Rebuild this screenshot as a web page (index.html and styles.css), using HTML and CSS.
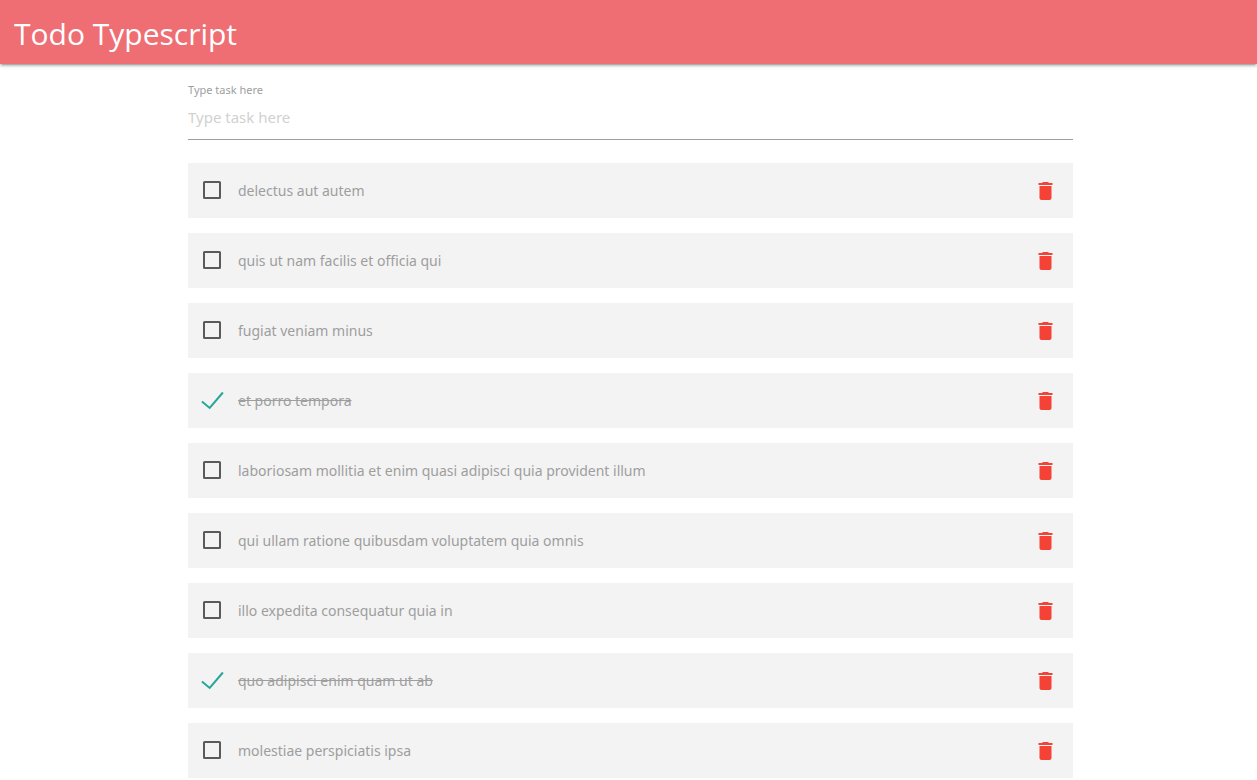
FILE: index.html
```html
<!DOCTYPE html>
<html lang="en">
<head>
<meta charset="utf-8">
<meta name="viewport" content="width=device-width, initial-scale=1">
<title>Todo Typescript</title>
<link rel="stylesheet" href="styles.css">
</head>
<body>
<svg class="sprite" aria-hidden="true">
  <symbol id="trash" viewBox="-0.500 -1 24 24"><path d="M6 19c0 1.1.9 2 2 2h8c1.1 0 2-.9 2-2V7H6v12zM19 4h-3.500l-1-1h-5l-1 1H5v2h14V4z"/></symbol>
</svg>
<header class="navbar"><a class="brand" href="#">Todo Typescript</a></header>
<main class="container">
  <form class="task-form">
    <label class="task-label" for="task">Type task here</label>
    <input class="task-input" id="task" type="text" placeholder="Type task here">
  </form>
  <ul class="todos">
    <li class="todo"><label class="todo-label"><input class="check" type="checkbox"><span>delectus aut autem</span></label><button class="delete" type="button" aria-label="Delete"><svg class="icon"><use href="#trash"/></svg></button></li>
    <li class="todo"><label class="todo-label"><input class="check" type="checkbox"><span>quis ut nam facilis et officia qui</span></label><button class="delete" type="button" aria-label="Delete"><svg class="icon"><use href="#trash"/></svg></button></li>
    <li class="todo"><label class="todo-label"><input class="check" type="checkbox"><span>fugiat veniam minus</span></label><button class="delete" type="button" aria-label="Delete"><svg class="icon"><use href="#trash"/></svg></button></li>
    <li class="todo"><label class="todo-label"><input class="check" type="checkbox" checked><span>et porro tempora</span></label><button class="delete" type="button" aria-label="Delete"><svg class="icon"><use href="#trash"/></svg></button></li>
    <li class="todo"><label class="todo-label"><input class="check" type="checkbox"><span>laboriosam mollitia et enim quasi adipisci quia provident illum</span></label><button class="delete" type="button" aria-label="Delete"><svg class="icon"><use href="#trash"/></svg></button></li>
    <li class="todo"><label class="todo-label"><input class="check" type="checkbox"><span>qui ullam ratione quibusdam voluptatem quia omnis</span></label><button class="delete" type="button" aria-label="Delete"><svg class="icon"><use href="#trash"/></svg></button></li>
    <li class="todo"><label class="todo-label"><input class="check" type="checkbox"><span>illo expedita consequatur quia in</span></label><button class="delete" type="button" aria-label="Delete"><svg class="icon"><use href="#trash"/></svg></button></li>
    <li class="todo"><label class="todo-label"><input class="check" type="checkbox" checked><span>quo adipisci enim quam ut ab</span></label><button class="delete" type="button" aria-label="Delete"><svg class="icon"><use href="#trash"/></svg></button></li>
    <li class="todo"><label class="todo-label"><input class="check" type="checkbox"><span>molestiae perspiciatis ipsa</span></label><button class="delete" type="button" aria-label="Delete"><svg class="icon"><use href="#trash"/></svg></button></li>
  </ul>
</main>
</body>
</html>
```
FILE: styles.css
```css
* {
  box-sizing: border-box;
}

body {
  margin: 0;
  background: #fff;
  font-family: "Segoe UI", "Noto Sans", "Open Sans", sans-serif;
  font-size: 14px;
}

.sprite {
  display: none;
}

.navbar {
  padding: 4px 14px 0;
  background: #ee6e73;
  box-shadow: 0 2px 2px 0 rgba(0, 0, 0, 0.14), 0 3px 1px -2px rgba(0, 0, 0, 0.12), 0 1px 5px 0 rgba(0, 0, 0, 0.2);
}

.brand {
  display: block;
  color: #fff;
  font-family: "Segoe UI", "Open Sans", sans-serif;
  font-size: 30px;
  line-height: 60px;
  text-decoration: none;
}

.container {
  padding: 16px 184px 0 188px;
}

.task-form {
  display: flex;
  flex-direction: column;
}

.task-label {
  color: #9e9e9e;
  font-size: 11px;
  line-height: 20px;
}

.task-input {
  width: 100%;
  height: 40px;
  padding: 0 0 5px;
  border: 0;
  border-bottom: 1px solid #9e9e9e;
  background: transparent;
  font-family: inherit;
  font-size: 15px;
  outline: 0;
}

.task-input::placeholder {
  color: #d1d1d1;
}

.todos {
  display: flex;
  flex-direction: column;
  gap: 15px;
  margin: 23px 0 0;
  padding: 0;
  list-style: none;
}

.todo {
  display: flex;
  gap: 16px;
  padding: 15px 16px 14px 12px;
  background: #f3f3f3;
}

.todo-label {
  display: flex;
  flex: 1;
  gap: 14px;
  color: #9e9e9e;
  line-height: 26px;
  cursor: pointer;
}

.check {
  flex: none;
  width: 24px;
  height: 24px;
  margin: 0;
  appearance: none;
  background: url("data:image/svg+xml,%3Csvg xmlns='http://www.w3.org/2000/svg' viewBox='0 0 24 24'%3E%3Crect x='4' y='4' width='16' height='16' rx='.5' fill='none' stroke='%235a5a5a' stroke-width='2'/%3E%3C/svg%3E");
}

.check:checked {
  background: url("data:image/svg+xml,%3Csvg xmlns='http://www.w3.org/2000/svg' viewBox='0 0 24 24'%3E%3Cpath d='M1.900 13.500L9.700 19.900L22.900 4.500' fill='none' stroke='%2326a69a' stroke-width='2'/%3E%3C/svg%3E");
}

.check:checked + span {
  text-decoration: line-through;
}

.delete {
  flex: none;
  width: 24px;
  height: 24px;
  padding: 0;
  border: 0;
  background: transparent;
  cursor: pointer;
}

.icon {
  display: block;
  width: 24px;
  height: 24px;
  fill: #f44336;
}

@media (max-width: 900px) {
  .container {
    padding: 16px 16px 0;
  }
}
```
